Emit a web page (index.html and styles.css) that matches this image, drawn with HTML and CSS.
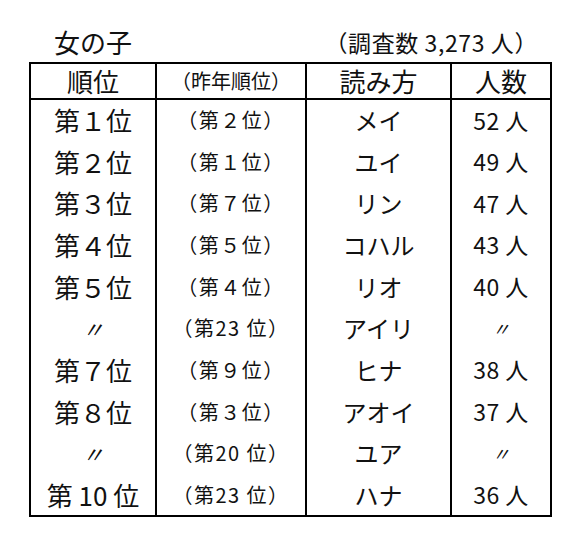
FILE: index.html
```html
<!DOCTYPE html>
<html lang="ja">
<head>
<meta charset="utf-8">
<link rel="stylesheet" href="styles.css">
</head>
<body>
<div class="page">
  <div class="title">
    <span class="title-left">女の子</span>
    <span class="title-right">（調査数 3,273 人）</span>
  </div>
  <table class="rank">
    <colgroup>
      <col class="c1"><col class="c2"><col class="c3"><col class="c4">
    </colgroup>
    <thead>
      <tr>
        <th class="big">順位</th>
        <th class="prev">（昨年順位）</th>
        <th class="big">読み方</th>
        <th class="big">人数</th>
      </tr>
    </thead>
    <tbody>
      <tr><td class="big">第１位</td><td class="prev">（第２位）</td><td class="name">メイ</td><td class="num">52 人</td></tr>
      <tr><td class="big">第２位</td><td class="prev">（第１位）</td><td class="name">ユイ</td><td class="num">49 人</td></tr>
      <tr><td class="big">第３位</td><td class="prev">（第７位）</td><td class="name">リン</td><td class="num">47 人</td></tr>
      <tr><td class="big">第４位</td><td class="prev">（第５位）</td><td class="name">コハル</td><td class="num">43 人</td></tr>
      <tr><td class="big">第５位</td><td class="prev">（第４位）</td><td class="name">リオ</td><td class="num">40 人</td></tr>
      <tr><td class="ditto">〃</td><td class="prev">（第23 位）</td><td class="name">アイリ</td><td class="ditto small">〃</td></tr>
      <tr><td class="big">第７位</td><td class="prev">（第９位）</td><td class="name">ヒナ</td><td class="num">38 人</td></tr>
      <tr><td class="big">第８位</td><td class="prev">（第３位）</td><td class="name">アオイ</td><td class="num">37 人</td></tr>
      <tr><td class="ditto">〃</td><td class="prev">（第20 位）</td><td class="name">ユア</td><td class="ditto small">〃</td></tr>
      <tr><td class="big">第 10 位</td><td class="prev">（第23 位）</td><td class="name">ハナ</td><td class="num">36 人</td></tr>
    </tbody>
  </table>
</div>
</body>
</html>
```
FILE: styles.css
```css
html, body {
  margin: 0;
  padding: 0;
  background: #fff;
}
body {
  font-family: "Noto Sans CJK JP", "DejaVu Sans", sans-serif;
  color: #111;
}
.page {
  padding: 22px 0 0 29px;
  width: 521px;
}
.title {
  height: 40px;
  display: flex;
  justify-content: space-between;
  align-items: center;
  padding: 0 12px 0 25px;
}
.title-left {
  font-size: 26px;
  line-height: 1;
}
.title-right {
  font-size: 23px;
  line-height: 1;
  letter-spacing: 0.6px;
}
.rank {
  border-collapse: collapse;
  width: 521px;
  table-layout: fixed;
  border: 2px solid #000;
}
.c1 { width: 126px; }
.c2 { width: 150px; }
.c3 { width: 145px; }
.c4 { width: 100px; }
.rank th, .rank td {
  border-left: 2px solid #000;
  border-right: 2px solid #000;
  padding: 0;
  text-align: center;
  font-weight: normal;
  white-space: nowrap;
}
.rank thead tr {
  height: 36px;
}
.rank thead th {
  border-bottom: 2px solid #000;
  line-height: 1;
}
.rank tbody tr {
  height: 41.7px;
}
.big {
  font-size: 26px;
  line-height: 1;
}
.prev {
  font-size: 20px;
  line-height: 1;
}
.rank tbody .prev {
  letter-spacing: 1.5px;
}
.name {
  font-size: 24px;
  line-height: 1;
}
.num {
  font-size: 23px;
  line-height: 1;
  letter-spacing: 0.5px;
}
.ditto {
  font-size: 22px;
  line-height: 1;
  font-style: italic;
}
.ditto.small {
  font-size: 18px;
}
```
